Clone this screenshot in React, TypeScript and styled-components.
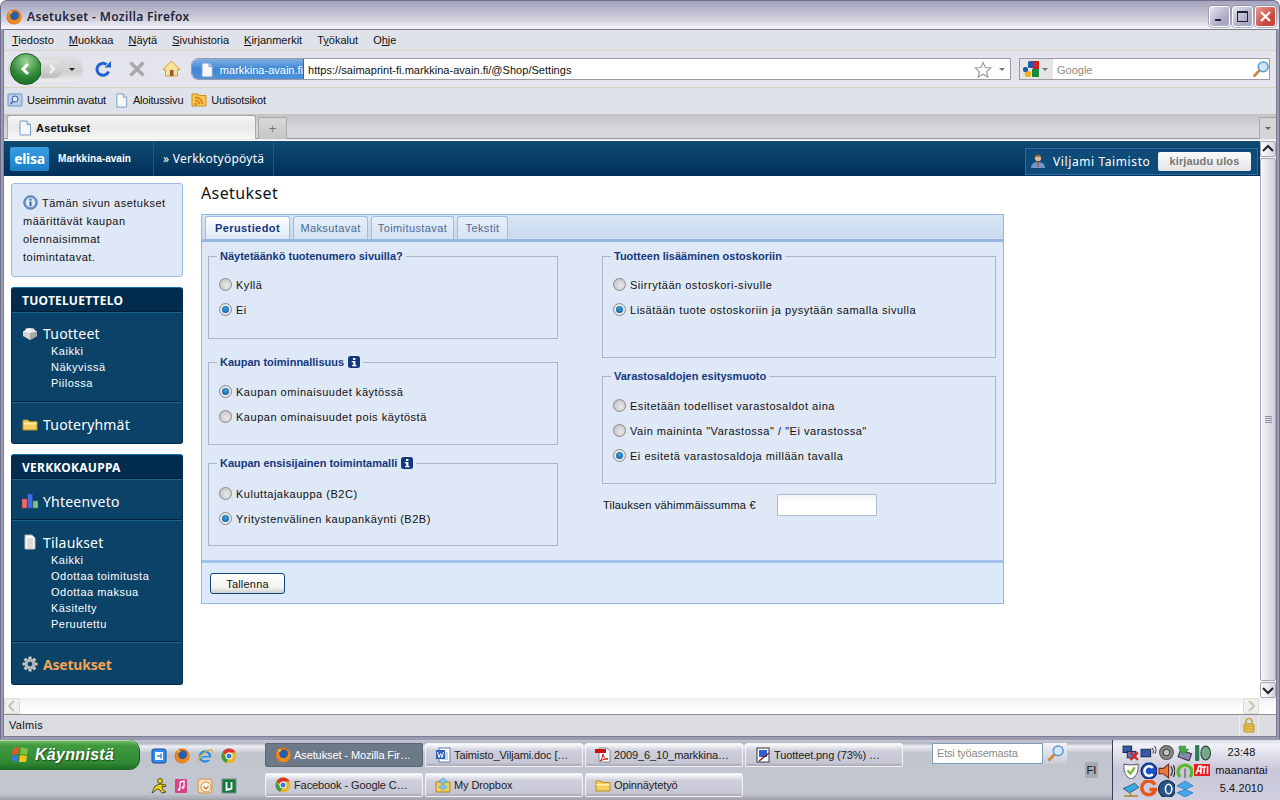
import React from "react";
import styled, { createGlobalStyle } from "styled-components";

const UI = '"Liberation Sans", Arial, sans-serif';
const WIDE = '"Noto Sans", "Open Sans", sans-serif';

const Global = createGlobalStyle`
  html, body { margin: 0; padding: 0; overflow: hidden; background: #fff; }
  * { box-sizing: border-box; }
  body { font-family: ${UI}; font-size: 11px; color: #111; }
`;

const Screen = styled.div`
  width: 1280px; height: 800px; display: flex; flex-direction: column; overflow: hidden;
`;
const Win = styled.div`
  height: 739px; flex: none; display: flex; flex-direction: column;
  background: #9a9ab2; border-radius: 7px 7px 0 0; border: 1px solid #6f6f8c; border-bottom: 0;
`;
const TitleBar = styled.div`
  height: 28px; flex: none; display: flex; align-items: center; padding: 3px 3px 0 5px;
  background: linear-gradient(#a3a3bb 0, #b8b8cb 30%, #d4d4e0 70%, #f3f3f7 95%);
  border-radius: 6px 6px 0 0;
`;
const TitleText = styled.span`
  margin-left: 5px; flex: 1; font: 600 12px ${WIDE}; letter-spacing: .35px; color: #25253a;
`;
const WinBtn = styled.span<{ $red?: boolean }>`
  width: 21px; height: 21px; margin-left: 2px; border-radius: 3px; display: grid; place-items: center;
  border: 1px solid #fff;
  background: ${p => p.$red ? "linear-gradient(135deg,#e89a8e,#c8463a 70%)" : "linear-gradient(135deg,#e6e6f0,#a9a9c4 70%)"};
  box-shadow: 0 0 0 .5px #77778f;
`;
const Inner = styled.div`
  flex: 1; margin: 0 2px 2px; border: 1px solid #7d7d90; display: flex; flex-direction: column; min-height: 0; background: #e0e2ea;
`;
const MenuBar = styled.div`
  height: 21px; flex: none; display: flex; align-items: center; gap: 15px; padding-left: 8px;
  border-bottom: 1px solid #d9d4bd;
`;
const MenuItem = styled.span`font-size: 11px;`;
const NavBar = styled.div`
  height: 37px; flex: none; display: flex; align-items: center; padding-left: 4px;
  border-bottom: 1px solid #d9d4bd; background: #e4e5ec;
`;
const BackPill = styled.div`
  width: 75px; height: 26px; display: flex; align-items: center; border-radius: 13px;
  background: linear-gradient(#e0e0e2,#cfcfd2 60%,#eceded); padding-left: 2px;
`;
const BackCircle = styled.span`
  width: 32px; height: 32px; margin: -3px 0; border-radius: 50%; display: grid; place-items: center; flex: none;
  background: radial-gradient(circle at 50% 25%, #9ed39a, #2f8a35 55%, #12601d); border: 1px solid #1b5c22;
`;
const Fwd = styled.span`
  width: 22px; height: 18px; display: grid; place-items: center; background: linear-gradient(#e5e5e5,#bdbdbd); border-radius: 0 9px 9px 0; margin-left: -1px;
`;
const Caret = styled.i<{ $c?: string; $m?: number; $r?: number }>`
  width: 0; height: 0; display: inline-block; margin-left: ${p => p.$m ?? 0}px; margin-right: ${p => p.$r ?? 0}px;
  border: 3px solid transparent; border-top: 3px solid ${p => p.$c ?? "#222"}; border-bottom: 0;
`;
const NavBtn = styled.span`
  width: 34px; display: grid; place-items: center; flex: none;
`;
const NavBtns = styled.div`display: flex; margin: 0 3px 0 3px;`;
const UrlBar = styled.div`
  width: 820px; height: 22px; display: flex; align-items: center; background: #fff; border: 1px solid #9a9aa8; border-radius: 7px 0 0 7px;
`;
const Identity = styled.span`
  width: 112px; height: 20px; display: flex; align-items: center; gap: 5px; padding: 1px 0 0 7px; color: #fff; flex: none; white-space: nowrap;
  background: linear-gradient(#7eb1e4,#3f86d3 50%,#4e93d9); border-radius: 6px 0 0 6px; border-right: 1px solid #2a6bb4; font-size: 11px;
`;
const UrlText = styled.span`flex: 1; padding: 1px 0 0 4px; font-size: 11px; letter-spacing: .03px;`;
const SearchBar = styled.div`
  width: 251px; height: 22px; margin-left: 8px; display: flex; align-items: center; background: #fff; border: 1px solid #9a9aa8; 
`;
const SearchEngine = styled.span`
  width: 33px; height: 20px; display: flex; align-items: center; gap: 3px; padding-left: 3px; background: #e5e5e5; flex: none;
`;
const SearchHint = styled.span`flex: 1; padding: 1px 0 0 4px; color: #8c8c82;`;
const Bookmarks = styled.div`
  height: 26px; flex: none; display: flex; align-items: center; gap: 8px; padding: 0 0 2px 3px; letter-spacing: -.2px;
`;
const Mark = styled.span`display: flex; align-items: center; gap: 4px;`;
const TabStrip = styled.div`
  height: 26px; flex: none; display: flex; align-items: flex-end; padding-left: 3px;
  background: linear-gradient(#c4c4c4,#d8d8dc 60%); border-bottom: 1px solid #e8e8ee; box-shadow: inset 0 -1px 0 #9a9a9a;
`;
const BrowserTab = styled.div`
  width: 249px; height: 24px; display: flex; align-items: center; gap: 3px; padding-left: 9px; font-weight: 700; letter-spacing: .2px;
  background: linear-gradient(#f6f6f6,#e9e9e9 50%,#f7f7f7); border: 1px solid #a8a8a8; border-bottom: 0; border-radius: 3px 3px 0 0;
`;
const NewTab = styled.div`
  width: 29px; height: 22px; margin-left: 2px; display: grid; place-items: center; color: #777; font-size: 13px;
  background: linear-gradient(#d8d8d8,#c6c6c6); border: 1px solid #a8a8a8; border-bottom: 0; border-radius: 2px 2px 0 0;
`;
const TabMenu = styled.div`
  width: 17px; height: 22px; margin-left: auto; display: grid; place-items: center; background: #d4d4d6; border: 1px solid #a8a8a8; border-bottom: 0; border-right: 0;
`;
const Viewport = styled.div`
  flex: 1; min-height: 0; display: flex; flex-direction: column; background: #fff; border-top: 1px solid #fff;
`;
const ViewRow = styled.div`flex: 1; min-height: 0; display: flex;`;
const Page = styled.div`flex: 1; display: flex; flex-direction: column; min-width: 0;`;
const TopNav = styled.div`
  height: 35px; flex: none; display: flex; align-items: center; color: #fff;
  background: linear-gradient(#0f4b72,#01305a);
`;
const Logo = styled.span`
  width: 39px; height: 24px; margin-left: 6px; border-radius: 2px; display: grid; place-items: center; color: #fff; font: 700 14px ${WIDE}; letter-spacing: -.3px;
  background: linear-gradient(#3a9de2,#1c7fc8);
`;
const Brand = styled.span`
  width: 105px; padding-left: 9px; font-size: 10px; font-weight: 700; height: 100%; display: flex; align-items: center; letter-spacing: .05px;
  border-right: 1px solid #0e5c9a;
`;
const TopLink = styled.span`
  height: 100%; width: 120px; padding-left: 9px; display: flex; align-items: center; font: 12px ${WIDE}; letter-spacing: .25px; border-right: 1px solid #0e5c9a;
`;
const UserBox = styled.div`
  margin-left: auto; margin-right: 2px; margin-top: 5px; height: 27px; width: 233px; display: flex; align-items: center; padding-left: 4px;
  background: #0f4b78; border: 1px solid #2a6ea8;
`;
const UserName = styled.span`margin-left: 7px; width: 105px; font: 12px ${WIDE}; letter-spacing: .6px;`;
const Logout = styled.span`
  width: 93px; height: 19px; border-radius: 2px; display: grid; place-items: center; color: #777; font: 700 11px "Liberation Sans", Arial, sans-serif; letter-spacing: .1px;
  background: linear-gradient(#fafafa,#e4e4e4);
`;
const Body = styled.div`flex: 1; display: flex; padding-left: 7px; min-height: 0;`;
const Side = styled.aside`width: 172px; flex: none; padding-top: 7px; display: flex; flex-direction: column; gap: 10px;`;
const Info = styled.div`
  height: 94px; flex: none; padding: 10px 10px 0 11px; background: #dfe8f7; border: 1px solid #9bbbe6; border-radius: 3px; line-height: 18px; letter-spacing: .5px; color: #111;
  svg { vertical-align: -3px; margin-right: 4px; }
`;
const SideBox = styled.div`
  background: #0a4268; border-radius: 3px; overflow: hidden; border-top: 1px solid #1474b8; border-bottom: 1px solid #032b48; border-left: 1px solid #06304f; border-right: 1px solid #06304f; color: #fff;
`;
const SideHead = styled.div`
  height: 24px; padding: 1px 0 0 10px; display: flex; align-items: center; background: #012c4d; font: 700 12px ${WIDE}; letter-spacing: .25px; border-bottom: 1px solid #011f38;
`;
const SideGroup = styled.div<{ $h: number; $t?: number }>`
  height: ${p => p.$h}px; padding: ${p => p.$t ?? 10}px 0 0 10px; border-top: 1px solid #1a628f;
  &:not(:last-child) { border-bottom: 1px solid #01233c; }
`;
const SideTitle = styled.div<{ $on?: boolean }>`
  height: 21px; padding-top: 1px; display: flex; align-items: center; gap: 5px; font: ${p => (p.$on ? 700 : 400)} 14px ${WIDE}; letter-spacing: ${p => (p.$on ? "-.2px" : ".2px")};
  color: ${p => (p.$on ? "#f2a553" : "#fff")};
  svg { flex: none; }
`;
const SideSub = styled.div`height: 16px; padding-left: 29px; line-height: 16px; font-size: 11px; letter-spacing: .5px;`;
const Main = styled.main`margin-left: 18px; flex: none; width: 803px;`;
const H1 = styled.h1`margin: 7px 0 11px; font: 400 16px/20px ${WIDE}; letter-spacing: .4px; color: #111;`;
const Box = styled.div`border: 1px solid #97b7e3; background: #dfe8f6;`;
const Tabs = styled.div`
  height: 25px; display: flex; gap: 3px; padding: 1px 0 0 3px; background: linear-gradient(#d8e5f4,#c7d9ee);
  border-bottom: 1px solid #97b7e3; box-shadow: inset 0 -1px 0 #d4e2f3;
`;
const FormTab = styled.span<{ $on?: boolean; $w: number }>`
  width: ${p => p.$w}px; height: 23px; display: grid; place-items: center; border: 1px solid #9dbde8; border-bottom: 0; border-radius: 3px 3px 0 0;
  background: ${p => p.$on ? "linear-gradient(#fff,#dce8f7)" : "linear-gradient(#e6eff9,#d6e3f3)"};
  color: ${p => (p.$on ? "#14387f" : "#4b6a94")}; font-weight: ${p => (p.$on ? 700 : 400)}; letter-spacing: .4px;
`;
const Grid = styled.div`
  height: 320px; padding: 8px 0 0 6px; display: flex; gap: 44px; border-top: 2px solid #97b7e3;
`;
const Col = styled.div<{ $w: number }>`width: ${p => p.$w}px; display: flex; flex-direction: column;`;
const Field = styled.fieldset<{ $h: number; $mb: number }>`
  margin: 0 0 ${p => p.$mb}px; padding: 0 8px; height: ${p => p.$h}px; border: 1px solid #aab6c8; min-width: 0;
`;
const Legend = styled.legend`
  padding: 0 3px; height: 12px; line-height: 12px; font-weight: 700; color: #14387f; font-size: 11px; letter-spacing: 0; display: flex; align-items: center; gap: 4px;
`;
const Options = styled.div<{ $t: number }>`padding: ${p => p.$t}px 0 0 2px;`;
const Opt = styled.label`
  height: 25px; display: flex; align-items: center; gap: 4px; letter-spacing: .52px; color: #111;
`;
const Radio = styled.span<{ $on?: boolean }>`
  width: 13px; height: 13px; border-radius: 50%; border: 1px solid #8a8a8a; flex: none; display: grid; place-items: center;
  background: ${p => p.$on ? "#e8e8e8" : "radial-gradient(circle at 60% 60%, #e9e9e9, #bcbcbc)"};
  &::after { content: ""; width: 7px; height: 7px; border-radius: 50%; display: ${p => (p.$on ? "block" : "none")};
    background: radial-gradient(circle at 50% 40%, #3aa7e4, #0a4d90); }
`;
const MinRow = styled.div`display: flex; align-items: center; letter-spacing: .2px; padding-left: 1px;`;
const MinLabel = styled.span`width: 174px;`;
const MinInput = styled.span`
  width: 100px; height: 22px; background: linear-gradient(#f3f3f3,#fff 40%); border: 1px solid #b4bdcf; display: block;
`;
const Foot = styled.div`height: 43px; padding: 10px 0 0 8px; background: #dce9fb; border-top: 3px solid #a4c1ea;`;
const SaveBtn = styled.span`
  width: 75px; height: 21px; display: grid; place-items: center; border: 1px solid #134274; border-radius: 3px; color: #111; letter-spacing: .2px;
  background: linear-gradient(#fff,#f2f2f2 70%,#cfcfcf);
`;
const VScroll = styled.div`
  width: 16px; flex: none; display: flex; flex-direction: column; background: #f4f4f6;
`;
const ScrollBtn = styled.span<{ $off?: boolean }>`
  width: 16px; height: 16px; flex: none; display: grid; place-items: center; border: 1px solid ${p => p.$off ? "#dcdcd0" : "#a8a8b8"}; border-radius: 2px;
  background: ${p => p.$off ? "#f0f0ea" : "linear-gradient(90deg,#fff,#d4d4e0)"};
`;
const Thumb = styled.span`
  flex: 1; margin: 1px 0; border: 1px solid #a8a8b8; border-radius: 2px; display: grid; place-items: center; background: linear-gradient(90deg,#f6f6fa,#cfcfdd);
`;
const Grip = styled.i`width: 7px; height: 7px; display: block; background: repeating-linear-gradient(#8c8ca0 0 1px, transparent 1px 2px);`;
const HScroll = styled.div`
  height: 17px; flex: none; display: flex; justify-content: space-between; padding-right: 17px; background: linear-gradient(#eee,#f8f8fb 30%,#fff); border-bottom: 1px solid #8e8e92;
`;
const Status = styled.div`
  height: 21px; flex: none; display: flex; align-items: center; padding: 0 0 1px 5px; background: #dcdde2; letter-spacing: .3px;
`;
const LockCell = styled.span`
  margin-left: auto; margin-right: 17px; width: 20px; height: 20px; display: grid; place-items: center; border-left: 1px solid #f2efdf; border-right: 1px solid #f2efdf;
`;
const Taskbar = styled.div`
  flex: 1; display: flex; background: linear-gradient(#c4c7d2,#b5b8c6 6%,#eef0f5 10%, #c1c5ce 22%, #c2c6cf 88%, #9a9aa6); border-top: 1px solid #9a9aae;
`;
const StartCol = styled.div`width: 140px; flex: none;`;
const Start = styled.div`
  height: 30px; border-radius: 0 11px 11px 0; display: flex; align-items: center; gap: 5px; padding-left: 10px; color: #fff;
  font: italic 700 16px "Liberation Sans", Arial, sans-serif; letter-spacing: .3px; text-shadow: 1px 1px 1px #1d4d1d;
  background: linear-gradient(#7dbf74,#419a40 18%,#2f8a33 75%,#1d6a22); border-right: 1px solid #175c1c; box-shadow: inset 0 1px 0 #a8dca2;
`;
const Quick = styled.div`
  width: 117px; flex: none; display: grid; grid-template-columns: repeat(4, 23.3px); grid-auto-rows: 30px; place-items: center; padding: 1px 0 0 7px; align-content: start; justify-content: start;
`;
const QuickSlot = styled.span`display: grid; place-items: center;`;
const Tasks = styled.div`
  width: 646px; flex: none; display: grid; grid-template-columns: repeat(4, 158px); column-gap: 2px; row-gap: 6px; padding: 3px 0 0 8px; grid-auto-rows: 24px;
`;
const Task = styled.div<{ $on?: boolean }>`
  display: flex; align-items: center; gap: 3px; padding-left: 9px; overflow: hidden; white-space: nowrap; font-size: 11px; letter-spacing: -.1px; border-radius: 2px;
  color: ${p => (p.$on ? "#fff" : "#222")};
  background: ${p => p.$on ? "#6d7987" : "linear-gradient(#fdfdfe,#cfcfdc 30%,#c6c7d5 85%,#a8a8b6)"};
  border: 1px solid ${p => (p.$on ? "#5a6675" : "#f2f2f6")};
`;
const TaskSearch = styled.div`
  width: 135px; flex: none; margin: 3px 0 0 29px; height: 21px; display: flex;
`;
const TaskInput = styled.span`
  width: 111px; height: 21px; background: #fff; border: 1px solid #7f9db9; color: #8c8c82; padding-left: 4px; line-height: 19px; letter-spacing: -.2px; flex: none;
`;
const TaskGo = styled.span`width: 24px; display: grid; place-items: center; background: linear-gradient(#f4f4f8,#c9cad6);`;
const LangSlot = styled.div`width: 45px; flex: none; padding: 22px 0 0 18px;`;
const Lang = styled.span`display: block; width: 13px; height: 16px; background: #a8abb6; text-align: center; line-height: 16px; font-size: 11px;`;
const Tray = styled.div`
  flex: 1; display: flex; border-left: 1px solid #3d3d55; padding: 3px 0 0 8px;
  background: linear-gradient(#dcdce6,#f0f0f6 8%,#c6c6d8 50%,#d0d0e0);
`;
const TrayIcons = styled.div`
  width: 90px; display: grid; grid-template-columns: repeat(5, 18px); grid-auto-rows: 18px; place-items: center;
`;
const Clock = styled.div`
  flex: 1; display: flex; flex-direction: column; align-items: center; font-size: 11px; line-height: 18px; padding: 0 8px 0 0; letter-spacing: .1px;
`;

/* ---------- drawings ---------- */
type IP = { s?: number };
const V = ({ s = 16, children }: IP & { children: React.ReactNode }) => (
  <svg width={s} height={s} viewBox="0 0 16 16">{children}</svg>
);
const Firefox = ({ s }: IP) => (
  <V s={s}>
    <circle cx="8" cy="8" r="7.5" fill="#e2701c" />
    <circle cx="8.5" cy="7" r="4.6" fill="#2c5ea6" />
    <path d="M2 5c-1.5 5 2 10 7 10 4 0 6.5-3 6.5-7 0-2-1-4-2-5 .5 2 .5 3-.5 5-1 2.500-3.500 3.500-5.500 3C5 10.500 4 9 4.500 7 3.500 7 3 6 3 4.500Z" fill="#f08a1e" />
    <path d="M3 2c1 0 3 0 4 1.500-1.500.5-2.500 1-3 2.500C3 5 3 3.500 3 2Z" fill="#f6b13a" />
  </V>
);
const Chrome = ({ s }: IP) => (
  <V s={s}>
    <circle cx="8" cy="8" r="7.500" fill="#e8b72e" />
    <path d="M1.500 4.300A7.500 7.500 0 0 1 14.700 4.500H8a3.500 3.500 0 0 0-3.300 2.500Z" fill="#d9392c" />
    <path d="M1.500 4.300 4.700 9a3.500 3.500 0 0 0 2.500 2.400L5 15A7.500 7.500 0 0 1 1.500 4.300Z" fill="#3f9c3c" />
    <circle cx="8" cy="8" r="3.500" fill="#fff" />
    <circle cx="8" cy="8" r="2.500" fill="#3d78d6" />
  </V>
);
const IE = ({ s }: IP) => (
  <V s={s}>
    <circle cx="8" cy="8.500" r="5" fill="none" stroke="#2b8fe0" strokeWidth="2.400" />
    <rect x="5" y="8" width="7" height="1.600" fill="#2b8fe0" />
    <rect x="10" y="9.500" width="4" height="2.500" fill="#c1c5ce" />
    <path d="M1 14C0 12 6 4 12 2c2-1 4 0 3 3" fill="none" stroke="#e0b020" strokeWidth="1.200" />
  </V>
);
const PageIcon = ({ s }: IP) => (
  <V s={s}>
    <path d="M3 1h7l3.500 3.500V15H3Z" fill="#f4f8fd" stroke="#7f9cc4" />
    <path d="M10 1v3.500h3.500" fill="#d7e4f4" stroke="#7f9cc4" />
  </V>
);
const Doc = ({ s }: IP) => (
  <V s={s}>
    <path d="M3 1h7l3 3v11H3Z" fill="#fff" stroke="#b5b5b5" />
    <path d="M5 5h6M5 7h6M5 9h6M5 11h6M5 13h6" stroke="#b9b9b9" />
  </V>
);
const FolderY = ({ s }: IP) => (
  <V s={s}>
    <path d="M1 4h5l1 1.500h8V14H1Z" fill="#f4cf5c" stroke="#b79028" />
    <path d="M1.500 7h13v1.500h-13Z" fill="#fbeeb3" />
  </V>
);
const Info16 = ({ s }: IP) => (
  <V s={s}>
    <circle cx="8" cy="8" r="7.200" fill="#6b9bd6" stroke="#4a72a8" />
    <circle cx="8" cy="8" r="5" fill="#dfe9f6" />
    <rect x="7" y="7" width="2" height="5" fill="#2f5d9c" />
    <rect x="7" y="4" width="2" height="2" fill="#2f5d9c" />
  </V>
);
const InfoBadge = () => (
  <svg width="12" height="12" viewBox="0 0 12 12">
    <rect width="12" height="12" rx="2.500" fill="#14387f" />
    <rect x="5" y="2" width="2.400" height="2" fill="#fff" />
    <path d="M3.800 5H7.400v4H8.500v1.200H4V9H5.200V6.200H3.800Z" fill="#fff" />
  </svg>
);
const Lego = ({ s }: IP) => (
  <V s={s}>
    <path d="M8 3 15 6.500V11L8 15 1 11V6.500Z" fill="#d5d5d5" />
    <path d="M8 8 15 6.500 8 3 1 6.500Z" fill="#f2f2f2" />
    <path d="M8 8v7l7-4V6.500Z" fill="#a8a8a8" />
    <ellipse cx="5.500" cy="4.500" rx="2" ry="1.300" fill="#fff" />
    <ellipse cx="10.500" cy="4.500" rx="2" ry="1.300" fill="#e4e4e4" />
  </V>
);
const Bars = ({ s }: IP) => (
  <V s={s}>
    <rect x="0" y="6" width="5" height="9" fill="#f06a6a" stroke="#c04050" strokeWidth=".6" />
    <rect x="5.500" y="1" width="5" height="14" fill="#3d6fe0" stroke="#2040b0" strokeWidth=".6" />
    <rect x="11" y="8" width="5" height="7" fill="#7cc47c" stroke="#4a8a4a" strokeWidth=".6" />
  </V>
);
const Gear = ({ s }: IP) => (
  <V s={s}>
    <g fill="#c9c9c9">
      {[0, 45, 90, 135].map(a => (
        <rect key={a} x="6.400" y="0.500" width="3.200" height="15" rx=".6" transform={`rotate(${a} 8 8)`} />
      ))}
    </g>
    <circle cx="8" cy="8" r="5.200" fill="#b5b5b5" />
    <circle cx="8" cy="8" r="2.300" fill="#0a4268" />
  </V>
);
const Person = () => (
  <V s={16}>
    <circle cx="8" cy="5" r="3.200" fill="#e3b68e" />
    <path d="M4.500 4.500C5 1 11 1 11.500 4.500 10 3 6 3 4.500 4.500Z" fill="#8a4a20" />
    <path d="M1 15c0-4 3-6 7-6s7 2 7 6Z" fill="#6f98c8" />
    <path d="M7 9h2l-.4 5h-1.200Z" fill="#c8502a" />
  </V>
);
const Reload = () => (
  <svg width="18" height="18" viewBox="0 0 18 18">
    <path d="M14.500 11.500A6 6 0 1 1 12.500 4.500" fill="none" stroke="#1f63d0" strokeWidth="3" />
    <path d="M10.500 7.500h6.500V1Z" fill="#1f63d0" />
  </svg>
);
const Stop = () => (
  <svg width="18" height="18" viewBox="0 0 18 18">
    <path d="M2.500 2.500 15.500 15.500M15.500 2.500 2.500 15.500" stroke="#a9a9a9" strokeWidth="3.600" />
  </svg>
);
const Home = () => (
  <svg width="19" height="18" viewBox="0 0 19 18">
    <path d="M9.500 1 18 9.500h-2.500V16h-12V9.500H1Z" fill="#f7e09a" stroke="#d8a028" />
    <rect x="8" y="10" width="3.500" height="6" fill="#8e5a2a" />
  </svg>
);
const Star = () => (
  <svg width="18" height="17" viewBox="0 0 18 17">
    <path d="M9 1.500 11.300 6.500 16.700 7 12.600 10.600 13.800 16 9 13.200 4.200 16 5.400 10.600 1.300 7 6.700 6.500Z" fill="#fff" stroke="#9c9c9c" strokeWidth="1.200" />
  </svg>
);
const GoogleMark = () => (
  <V s={16}>
    <rect x="5" y="0" width="6" height="7" fill="#2156a8" rx="1.500" />
    <path d="M10 0h6v9h-6Z" fill="#d21e1e" />
    <path d="M9 8h7v8H9Z" fill="#1a8a3a" />
    <circle cx="5" cy="13" r="3.300" fill="#f0b020" />
    <rect x="0" y="6" width="5" height="5" rx="2" fill="#2156a8" />
  </V>
);
const Loupe = () => (
  <V s={17}>
    <circle cx="10.500" cy="5.500" r="4.600" fill="#cfe6fb" stroke="#5d9ad6" strokeWidth="1.500" />
    <path d="M7 9 1.500 14.500" stroke="#c98a3a" strokeWidth="2.600" />
  </V>
);
const Rss = ({ s }: IP) => (
  <V s={s}>
    <path d="M1 2h6l1 1.500h7V14H1Z" fill="#f6c850" stroke="#c79020" />
    <circle cx="5" cy="12" r="1.300" fill="#e8780e" />
    <path d="M4 8.500a4 4 0 0 1 4.500 3.500M4 5.500a7 7 0 0 1 7.500 6.500" fill="none" stroke="#e8780e" strokeWidth="1.500" />
  </V>
);
const Recent = ({ s }: IP) => (
  <V s={s}>
    <rect x="1" y="2" width="14" height="12" rx="1" fill="#b8d0f0" stroke="#6f8fc0" />
    <circle cx="8" cy="7" r="3" fill="#dceafa" stroke="#3858a8" />
    <path d="M6 9.500 3.500 12" stroke="#3858a8" strokeWidth="1.500" />
  </V>
);
const Padlock = () => (
  <V s={16}>
    <path d="M5 7V4.500a3 3 0 0 1 6 0V7" fill="none" stroke="#c8a848" strokeWidth="1.600" />
    <rect x="3" y="7" width="10" height="8" rx="1" fill="#e8c050" stroke="#b89028" />
    <path d="M4 9.500h8M4 12h8" stroke="#c8a030" />
  </V>
);
const Flag = () => (
  <svg width="20" height="18" viewBox="0 0 20 18">
    <path d="M3 3 9 1 8 8 2 9Z" fill="#e8562a" />
    <path d="M11 1 18 3 17 9 10 8Z" fill="#7cc242" />
    <path d="M2 10 8 9 7 16 1 14Z" fill="#3d78e0" />
    <path d="M10 9 17 10 16 16 9 16Z" fill="#f6c21e" />
  </svg>
);
const Word = () => (
  <V s={16}>
    <rect x="4" y="1" width="11" height="14" fill="#fff" stroke="#5c7fc0" />
    <path d="M7 6h6M7 8h6M7 10h6M7 12h6" stroke="#88a4d8" />
    <rect x="1" y="3" width="9" height="9" fill="#2f5fb8" />
    <path d="M2.500 5 4 10.500 5.500 6.500 7 10.500 8.500 5" fill="none" stroke="#fff" />
  </V>
);
const Pdf = () => (
  <V s={16}>
    <path d="M4 1h8l3 3v11H4Z" fill="#fff" stroke="#8a8a8a" />
    <rect x="0" y="2" width="11" height="4" fill="#cc1010" />
    <path d="M5 14c2-2 3-5 3-7 0 3 2 5 5 5-3 0-5 .5-8 2Z" fill="none" stroke="#cc1010" />
  </V>
);
const Paint = () => (
  <V s={16}>
    <rect x="2" y="1" width="12" height="14" fill="#fff" stroke="#333" />
    <rect x="4" y="3" width="8" height="7" fill="#2f5fd0" />
    <path d="M4 14 14 6" stroke="#802020" strokeWidth="1.500" />
  </V>
);
const Dropbox = ({ s }: IP) => (
  <V s={s}>
    <path d="M1 5h14v10H1Z" fill="#f0cd60" stroke="#a88628" />
    <path d="M8 1 12 4 8 7 4 4ZM8 7 12 10 8 13 4 10Z" fill="#7cc8f0" stroke="#3d8ac8" strokeWidth=".5" />
  </V>
);
const Aim = () => (
  <V s={16}>
    <circle cx="9" cy="3" r="2.500" fill="#f2d010" stroke="#222" strokeWidth=".7" />
    <path d="M9 6 4 8 1 15 4 13 6 11 9 12 11 15 15 14 12 12 11 8 14 9 15 7Z" fill="#f2d010" stroke="#222" strokeWidth=".7" />
  </V>
);
const Itunes = () => (
  <V s={16}>
    <rect x="1" y="1" width="12" height="14" rx="1" fill="#d8408a" />
    <path d="M6 4v7M6 4l4-1v6" stroke="#fff" strokeWidth="1.300" fill="none" />
    <circle cx="5" cy="11.500" r="1.300" fill="#fff" /><circle cx="9" cy="9.500" r="1.300" fill="#fff" />
  </V>
);
const Mail = () => (
  <V s={16}>
    <rect x="1" y="1" width="14" height="14" rx="3" fill="#f8e0c0" stroke="#e09040" />
    <circle cx="9" cy="9" r="5" fill="#f6f2e8" stroke="#d89838" />
    <path d="M6.500 8.500 9 11 11.500 8.500" fill="none" stroke="#c87818" strokeWidth="1.200" />
  </V>
);
const Torrent = () => (
  <V s={16}>
    <rect x="1" y="1" width="14" height="14" fill="#127a3a" stroke="#7d8c8c" />
    <path d="M5.500 4v9M5.500 10c1 2 4 2 5 0M10.500 4v7.500" fill="none" stroke="#fff" strokeWidth="1.800" />
  </V>
);
const Outlook = () => (
  <V s={16}>
    <rect x="1" y="1" width="14" height="14" rx="2" fill="#2f8ae8" stroke="#1050a8" />
    <rect x="4" y="4" width="8" height="8" fill="#fff" />
    <path d="M6 8h4M10 5.500v5" stroke="#2f8ae8" strokeWidth="1.500" />
  </V>
);
const Network = ({ x }: { x?: boolean }) => (
  <V s={17}>
    <rect x="1" y="2" width="8" height="6" fill="#3858a8" stroke="#22304f" />
    <rect x="5" y="7" width="8" height="6" fill="#6078b8" stroke="#22304f" />
    {x && <path d="M8 8 15 15M15 8 8 15" stroke="#e02020" strokeWidth="2" />}
  </V>
);
const Wireless = () => (
  <V s={17}>
    <rect x="1" y="5" width="9" height="7" fill="#3858a8" stroke="#22304f" />
    <path d="M11 4c2 1 2 3 1 5M13.500 2c2 2 2 5 .5 7" fill="none" stroke="#445" />
  </V>
);
const Speaker = () => (
  <V s={17}>
    <circle cx="8" cy="8" r="6.500" fill="#888" stroke="#555" />
    <circle cx="8" cy="8" r="3" fill="#c8c8c8" stroke="#444" />
  </V>
);
const Sync = () => (
  <V s={17}>
    <rect x="3" y="7" width="11" height="7" fill="#88a" stroke="#334" transform="rotate(20 8 10)" />
    <path d="M3 2h6v3h3L7 10 3 5Z" fill="#4aa83a" stroke="#285" strokeWidth=".6" />
  </V>
);
const Mouse = () => (
  <V s={17}>
    <rect x="1" y="1" width="4" height="15" rx="1" fill="#2f7a5a" />
    <ellipse cx="11" cy="8.500" rx="4.500" ry="6.500" fill="#78a888" stroke="#244" />
  </V>
);
const Shield = () => (
  <V s={17}>
    <path d="M2 2c3 1 10 1 13 0 1 6-1 12-6.500 14C3 14 1 8 2 2Z" fill="#fff" stroke="#667" />
    <path d="M5 8 8 11 12 5" fill="none" stroke="#6ab82a" strokeWidth="2" />
  </V>
);
const RoundC = () => (
  <V s={17}>
    <circle cx="8.500" cy="8.500" r="7.500" fill="#1c50c8" stroke="#0a2060" />
    <path d="M12 5.500A4.500 4.500 0 1 0 12 11.500" fill="none" stroke="#fff" strokeWidth="2.400" />
  </V>
);
const Horn = () => (
  <V s={17}>
    <path d="M1 6h4l5-4v13L5 11H1Z" fill="#e87a40" stroke="#7a2a10" />
    <path d="M12 4c2 3 2 6 0 9M14.500 3c2 4 2 7 0 11" fill="none" stroke="#222" />
  </V>
);
const GreenLoop = () => (
  <V s={17}>
    <path d="M4 14A6.500 6.500 0 1 1 13 14" fill="none" stroke="#58b82a" strokeWidth="3" />
    <path d="M8.500 6v9" stroke="#888" strokeWidth="2" />
  </V>
);
const Ati = () => (
  <svg width="16" height="12" viewBox="0 0 16 12">
    <rect width="16" height="12" fill="#ed1c24" />
    <path d="M2 10 5 2h2v8M4 7h3M8 3h4M10 3v7M13.500 2v8" fill="none" stroke="#fff" strokeWidth="1.500" />
  </svg>
);
const Scanner = () => (
  <V s={17}>
    <path d="M1 8 12 3 16 7 7 12Z" fill="#3aa8e8" stroke="#234" strokeWidth=".6" />
    <path d="M2 15h13M8 12v3" stroke="#a88828" strokeWidth="1.300" />
  </V>
);
const GMark = () => (
  <V s={17}>
    <path d="M14 4.500A6.500 6.500 0 1 0 14.500 9H9" fill="none" stroke="#e8561a" strokeWidth="3.200" />
  </V>
);
const Globe = () => (
  <V s={17}>
    <circle cx="8.500" cy="8.500" r="8" fill="#24568a" stroke="#123" />
    <ellipse cx="10" cy="8.500" rx="3" ry="4.500" fill="none" stroke="#fff" strokeWidth="1.500" />
  </V>
);
const BlueBox = () => (
  <V s={17}>
    <path d="M8.500 1 16 5.500 8.500 9 1 5.500ZM8.500 9 16 12 8.500 16 1 12Z" fill="#45a8e8" stroke="#1a6ab0" strokeWidth=".6" />
  </V>
);
const Chevron = ({ d, c = "#fff", w = 3 }: { d: string; c?: string; w?: number }) => (
  <svg width="14" height="14" viewBox="0 0 14 14"><path d={d} fill="none" stroke={c} strokeWidth={w} /></svg>
);

const menus: [string, string, string][] = [
  ["", "T", "iedosto"], ["", "M", "uokkaa"], ["", "N", "äytä"], ["", "S", "ivuhistoria"],
  ["", "K", "irjanmerkit"], ["T", "y", "ökalut"], ["O", "h", "je"],
];

const Opts = ({ items, on, top = 11 }: { items: string[]; on: number; top?: number }) => (
  <Options $t={top}>
    {items.map((t, i) => (
      <Opt key={t}><Radio $on={i === on} />{t}</Opt>
    ))}
  </Options>
);

export default function App() {
  return (
    <Screen>
      <Global />
      <Win>
        <TitleBar>
          <Firefox s={16} />
          <TitleText>Asetukset - Mozilla Firefox</TitleText>
          <WinBtn><svg width="11" height="11"><rect x="1" y="8" width="6" height="2" fill="#223" /></svg></WinBtn>
          <WinBtn><svg width="13" height="13"><rect x="1.500" y="1.500" width="10" height="10" fill="none" stroke="#223" /><rect x="1" y="1" width="11" height="2" fill="#223" /></svg></WinBtn>
          <WinBtn $red><svg width="13" height="13"><path d="M2 2 11 11M11 2 2 11" stroke="#fff" strokeWidth="2.200" /></svg></WinBtn>
        </TitleBar>
        <Inner>
          <MenuBar>
            {menus.map(([a, b, c]) => (
              <MenuItem key={b + c}>{a}<u>{b}</u>{c}</MenuItem>
            ))}
          </MenuBar>
          <NavBar>
            <BackPill>
              <BackCircle><Chevron d="M9 2 4 7 9 12" /></BackCircle>
              <Fwd><Chevron d="M5 3 9 7 5 11" c="#f4f4f4" w={2.400} /></Fwd>
              <Caret $m={6} />
            </BackPill>
            <NavBtns>
              <NavBtn><Reload /></NavBtn>
              <NavBtn><Stop /></NavBtn>
              <NavBtn><Home /></NavBtn>
            </NavBtns>
            <UrlBar>
              <Identity><PageIcon s={16} />markkina-avain.fi</Identity>
              <UrlText>https://saimaprint-fi.markkina-avain.fi/@Shop/Settings</UrlText>
              <Star />
              <Caret $c="#777" $m={7} $r={5} />
            </UrlBar>
            <SearchBar>
              <SearchEngine><GoogleMark /><Caret $c="#777" /></SearchEngine>
              <SearchHint>Google</SearchHint>
              <Loupe />
            </SearchBar>
          </NavBar>
          <Bookmarks>
            <Mark><Recent s={16} />Useimmin avatut</Mark>
            <Mark><PageIcon s={15} />Aloitussivu</Mark>
            <Mark><Rss s={16} />Uutisotsikot</Mark>
          </Bookmarks>
          <TabStrip>
            <BrowserTab><PageIcon s={16} />Asetukset</BrowserTab>
            <NewTab>+</NewTab>
            <TabMenu><Caret $c="#666" /></TabMenu>
          </TabStrip>
          <Viewport>
            <ViewRow>
              <Page>
                <TopNav>
                  <Logo>elisa</Logo>
                  <Brand>Markkina-avain</Brand>
                  <TopLink>» Verkkotyöpöytä</TopLink>
                  <UserBox>
                    <Person />
                    <UserName>Viljami Taimisto</UserName>
                    <Logout>kirjaudu ulos</Logout>
                  </UserBox>
                </TopNav>
                <Body>
                  <Side>
                    <Info><Info16 s={15} />Tämän sivun asetukset määrittävät kaupan olennaisimmat toimintatavat.</Info>
                    <SideBox>
                      <SideHead>TUOTELUETTELO</SideHead>
                      <SideGroup $h={90} $t={9}>
                        <SideTitle><Lego s={16} />Tuotteet</SideTitle>
                        <SideSub>Kaikki</SideSub><SideSub>Näkyvissä</SideSub><SideSub>Piilossa</SideSub>
                      </SideGroup>
                      <SideGroup $h={41}>
                        <SideTitle><FolderY s={16} />Tuoteryhmät</SideTitle>
                      </SideGroup>
                    </SideBox>
                    <SideBox>
                      <SideHead>VERKKOKAUPPA</SideHead>
                      <SideGroup $h={41}>
                        <SideTitle><Bars s={16} />Yhteenveto</SideTitle>
                      </SideGroup>
                      <SideGroup $h={122}>
                        <SideTitle><Doc s={16} />Tilaukset</SideTitle>
                        <SideSub>Kaikki</SideSub><SideSub>Odottaa toimitusta</SideSub><SideSub>Odottaa maksua</SideSub><SideSub>Käsitelty</SideSub><SideSub>Peruutettu</SideSub>
                      </SideGroup>
                      <SideGroup $h={42}>
                        <SideTitle $on><Gear s={16} />Asetukset</SideTitle>
                      </SideGroup>
                    </SideBox>
                  </Side>
                  <Main>
                    <H1>Asetukset</H1>
                    <Box>
                      <Tabs>
                        <FormTab $on $w={85}>Perustiedot</FormTab>
                        <FormTab $w={75}>Maksutavat</FormTab>
                        <FormTab $w={83}>Toimitustavat</FormTab>
                        <FormTab $w={51}>Tekstit</FormTab>
                      </Tabs>
                      <Grid>
                        <Col $w={350}>
                          <Field $h={89} $mb={17}>
                            <Legend>Näytetäänkö tuotenumero sivuilla?</Legend>
                            <Opts items={["Kyllä", "Ei"]} on={1} top={10} />
                          </Field>
                          <Field $h={89} $mb={12}>
                            <Legend>Kaupan toiminnallisuus <InfoBadge /></Legend>
                            <Opts items={["Kaupan ominaisuudet käytössä", "Kaupan ominaisuudet pois käytöstä"]} on={0} />
                          </Field>
                          <Field $h={89} $mb={0}>
                            <Legend>Kaupan ensisijainen toimintamalli <InfoBadge /></Legend>
                            <Opts items={["Kuluttajakauppa (B2C)", "Yritystenvälinen kaupankäynti (B2B)"]} on={1} top={12} />
                          </Field>
                        </Col>
                        <Col $w={394}>
                          <Field $h={108} $mb={12}>
                            <Legend>Tuotteen lisääminen ostoskoriin</Legend>
                            <Opts items={["Siirrytään ostoskori-sivulle", "Lisätään tuote ostoskoriin ja pysytään samalla sivulla"]} on={1} top={10} />
                          </Field>
                          <Field $h={114} $mb={10}>
                            <Legend>Varastosaldojen esitysmuoto</Legend>
                            <Opts items={["Esitetään todelliset varastosaldot aina", 'Vain maininta "Varastossa" / "Ei varastossa"', "Ei esitetä varastosaldoja millään tavalla"]} on={2} />
                          </Field>
                          <MinRow><MinLabel>Tilauksen vähimmäissumma €</MinLabel><MinInput /></MinRow>
                        </Col>
                      </Grid>
                      <Foot><SaveBtn>Tallenna</SaveBtn></Foot>
                    </Box>
                  </Main>
                </Body>
              </Page>
              <VScroll>
                <ScrollBtn><Chevron d="M2 9 7 4 12 9" c="#222" w={2} /></ScrollBtn>
                <Thumb><Grip /></Thumb>
                <ScrollBtn><Chevron d="M2 5 7 10 12 5" c="#222" w={2} /></ScrollBtn>
              </VScroll>
            </ViewRow>
            <HScroll>
              <ScrollBtn $off><Chevron d="M9 2 4 7 9 12" c="#c4c4bc" w={2} /></ScrollBtn>
              <ScrollBtn $off><Chevron d="M5 2 10 7 5 12" c="#c4c4bc" w={2} /></ScrollBtn>
            </HScroll>
            <Status>Valmis<LockCell><Padlock /></LockCell></Status>
          </Viewport>
        </Inner>
      </Win>
      <Taskbar>
        <StartCol><Start><Flag />Käynnistä</Start></StartCol>
        <Quick>
          <QuickSlot><Outlook /></QuickSlot><QuickSlot><Firefox s={16} /></QuickSlot><QuickSlot><IE s={16} /></QuickSlot><QuickSlot><Chrome s={16} /></QuickSlot>
          <QuickSlot><Aim /></QuickSlot><QuickSlot><Itunes /></QuickSlot><QuickSlot><Mail /></QuickSlot><QuickSlot><Torrent /></QuickSlot>
        </Quick>
        <Tasks>
          <Task $on><Firefox s={16} />Asetukset - Mozilla Fir…</Task>
          <Task><Word />Taimisto_Viljami.doc […</Task>
          <Task><Pdf />2009_6_10_markkina…</Task>
          <Task><Paint />Tuotteet.png (73%) …</Task>
          <Task><Chrome s={16} />Facebook - Google C…</Task>
          <Task><Dropbox s={16} />My Dropbox</Task>
          <Task><FolderY s={16} />Opinnäytetyö</Task>
        </Tasks>
        <TaskSearch><TaskInput>Etsi työasemasta</TaskInput><TaskGo><Loupe /></TaskGo></TaskSearch>
        <LangSlot><Lang>FI</Lang></LangSlot>
        <Tray>
          <TrayIcons>
            <Network x /><Wireless /><Speaker /><Sync /><Mouse />
            <Shield /><RoundC /><Horn /><GreenLoop /><Ati />
            <Scanner /><GMark /><Globe /><BlueBox />
          </TrayIcons>
          <Clock><span>23:48</span><span>maanantai</span><span>5.4.2010</span></Clock>
        </Tray>
      </Taskbar>
    </Screen>
  );
}
